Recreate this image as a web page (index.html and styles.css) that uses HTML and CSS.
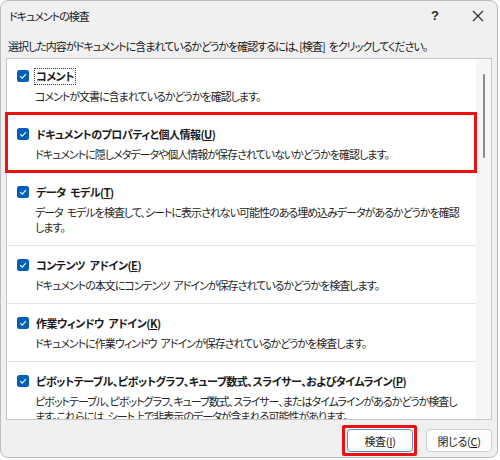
FILE: index.html
```html
<!DOCTYPE html>
<html lang="ja">
<head>
<meta charset="utf-8">
<title>ドキュメントの検査</title>
<link rel="stylesheet" href="styles.css">
</head>
<body>
<div class="window">
  <div class="titlebar">
    <span class="title">ドキュメントの検査</span>
    <span class="help">?</span>
    <span class="close"><svg width="12" height="12" viewBox="0 0 12 12"><path d="M1 1 L11 11 M11 1 L1 11" stroke="#2b2b2b" stroke-width="1.1" fill="none"/></svg></span>
  </div>
  <p class="intro">選択した内容がドキュメントに含まれているかどうかを確認するには、[検査] をクリックしてください。</p>
  <div class="list">
    <div class="items">
      <div class="item">
        <div class="row"><span class="cb"><svg width="12" height="12" viewBox="0 0 12 12"><rect x="0" y="0" width="12" height="12" rx="2.5" fill="#005fb8"/><path d="M3.2 6.2 L5.2 8.1 L8.9 4.2" stroke="#fff" stroke-width="1.1" fill="none"/></svg></span><span class="label focus">コメント</span></div>
        <div class="desc">コメントが文書に含まれているかどうかを確認します。</div>
      </div>
      <div class="item marked">
        <div class="row"><span class="cb"><svg width="12" height="12" viewBox="0 0 12 12"><rect x="0" y="0" width="12" height="12" rx="2.5" fill="#005fb8"/><path d="M3.2 6.2 L5.2 8.1 L8.9 4.2" stroke="#fff" stroke-width="1.1" fill="none"/></svg></span><span class="label">ドキュメントのプロパティと個人情報(<u>U</u>)</span></div>
        <div class="desc">ドキュメントに隠しメタデータや個人情報が保存されていないかどうかを確認します。</div>
      </div>
      <div class="item">
        <div class="row"><span class="cb"><svg width="12" height="12" viewBox="0 0 12 12"><rect x="0" y="0" width="12" height="12" rx="2.5" fill="#005fb8"/><path d="M3.2 6.2 L5.2 8.1 L8.9 4.2" stroke="#fff" stroke-width="1.1" fill="none"/></svg></span><span class="label">データ モデル(<u>T</u>)</span></div>
        <div class="desc">データ モデルを検査して、シートに表示されない可能性のある埋め込みデータがあるかどうかを確認<br>します。</div>
      </div>
      <div class="item">
        <div class="row"><span class="cb"><svg width="12" height="12" viewBox="0 0 12 12"><rect x="0" y="0" width="12" height="12" rx="2.5" fill="#005fb8"/><path d="M3.2 6.2 L5.2 8.1 L8.9 4.2" stroke="#fff" stroke-width="1.1" fill="none"/></svg></span><span class="label">コンテンツ アドイン(<u>E</u>)</span></div>
        <div class="desc">ドキュメントの本文にコンテンツ アドインが保存されているかどうかを検査します。</div>
      </div>
      <div class="item">
        <div class="row"><span class="cb"><svg width="12" height="12" viewBox="0 0 12 12"><rect x="0" y="0" width="12" height="12" rx="2.5" fill="#005fb8"/><path d="M3.2 6.2 L5.2 8.1 L8.9 4.2" stroke="#fff" stroke-width="1.1" fill="none"/></svg></span><span class="label">作業ウィンドウ アドイン(<u>K</u>)</span></div>
        <div class="desc">ドキュメントに作業ウィンドウ アドインが保存されているかどうかを検査します。</div>
      </div>
      <div class="item">
        <div class="row"><span class="cb"><svg width="12" height="12" viewBox="0 0 12 12"><rect x="0" y="0" width="12" height="12" rx="2.5" fill="#005fb8"/><path d="M3.2 6.2 L5.2 8.1 L8.9 4.2" stroke="#fff" stroke-width="1.1" fill="none"/></svg></span><span class="label">ピボットテーブル、ピボットグラフ、キューブ数式、スライサー、およびタイムライン(<u>P</u>)</span></div>
        <div class="desc">ピボットテーブル、ピボットグラフ、キューブ数式、スライサー、またはタイムラインがあるかどうか検査し<br>ます。これらには、シート上で非表示のデータが含まれる可能性があります。</div>
      </div>
    </div>
    <div class="scrollbar"><div class="thumb"></div></div>
  </div>
  <div class="buttons">
    <span class="marked-btn"><button class="btn default">検査(<u>I</u>)</button></span>
    <button class="btn">閉じる(<u>C</u>)</button>
  </div>
</div>
</body>
</html>
```

FILE: styles.css
```css
body {
  margin: 0;
  background: #ffffff;
  font-family: "Noto Sans CJK JP", "Noto Sans", sans-serif;
  font-feature-settings: "palt";
}

.window {
  width: 498px;
  height: 458px;
  box-sizing: border-box;
  border: 1px solid #bdbdbd;
  border-radius: 8px;
  background: #f0f0f0;
  color: #1a1a1a;
  font-size: 11px;
  letter-spacing: -1px;
  word-spacing: 2.5px;
  display: flex;
  flex-direction: column;
  overflow: hidden;
}

.titlebar {
  height: 29px;
  display: flex;
  align-items: center;
  padding-left: 8px;
  padding-right: 4px;
}

.title {
  flex: 1;
}

.help {
  width: 30px;
  text-align: center;
  font-family: "Liberation Sans", sans-serif;
  font-size: 13px;
  font-weight: bold;
  letter-spacing: 0;
  color: #2b2b2b;
  margin-right: 13px;
}

.close {
  width: 30px;
  display: flex;
  justify-content: center;
}

.intro {
  margin: 7px 0 3px 7px;
  line-height: 18px;
  white-space: nowrap;
}

.list {
  margin: 0 5px;
  height: 362px;
  box-sizing: border-box;
  border: 1px solid #c6c6c6;
  background: #ffffff;
  display: flex;
}

.items {
  flex: 1;
  min-width: 0;
  height: 360px;
  clip-path: inset(-8px -8px 0 -8px);
}

.item {
  padding: 10px 0 10px 10px;
  border-bottom: 1px solid #e3e3e3;
  position: relative;
}

.item:first-child {
  margin-top: -2px;
}

.row {
  display: flex;
  align-items: center;
  height: 18px;
}

.cb {
  width: 12px;
  height: 12px;
  margin-right: 6px;
  display: flex;
}

.label {
  font-weight: bold;
  letter-spacing: -0.5px;
  white-space: nowrap;
  border: 1px solid transparent;
  margin-left: -1px;
  padding: 0 1px;
  line-height: 15px;
}

.label.focus {
  border: 1px dotted #333333;
}

.desc {
  margin-top: 4px;
  padding-left: 18px;
  line-height: 15px;
  white-space: nowrap;
  color: #262626;
}

u {
  text-decoration: underline;
  text-underline-offset: 1px;
}

.marked::after {
  content: "";
  position: absolute;
  top: -3px;
  left: -2px;
  right: -1px;
  bottom: -1px;
  border: 3px solid #f01010;
}

.scrollbar {
  width: 15px;
  flex: none;
  background: #f6f6f6;
  display: flex;
  justify-content: center;
}

.thumb {
  width: 2px;
  height: 84px;
  margin-top: 15px;
  border-radius: 1px;
  background: #8a8a8a;
}

.buttons {
  display: flex;
  justify-content: flex-end;
  gap: 13px;
  padding: 9px 5px 0 0;
}

.btn {
  width: 66px;
  height: 23px;
  box-sizing: border-box;
  border: 1px solid #d0d0d0;
  border-radius: 4px;
  background: #fdfdfd;
  font-family: "Noto Sans CJK JP", sans-serif;
  font-feature-settings: "palt";
  font-size: 11px;
  letter-spacing: -0.3px;
  color: #1a1a1a;
  padding: 0;
  display: block;
}

.btn.default {
  border-color: #5b8fc7;
}

.marked-btn {
  position: relative;
  display: block;
}

.marked-btn::after {
  content: "";
  position: absolute;
  top: -4px;
  left: -5px;
  right: -4px;
  bottom: -4px;
  border: 3px solid #f01010;
  border-radius: 2px;
}
```
